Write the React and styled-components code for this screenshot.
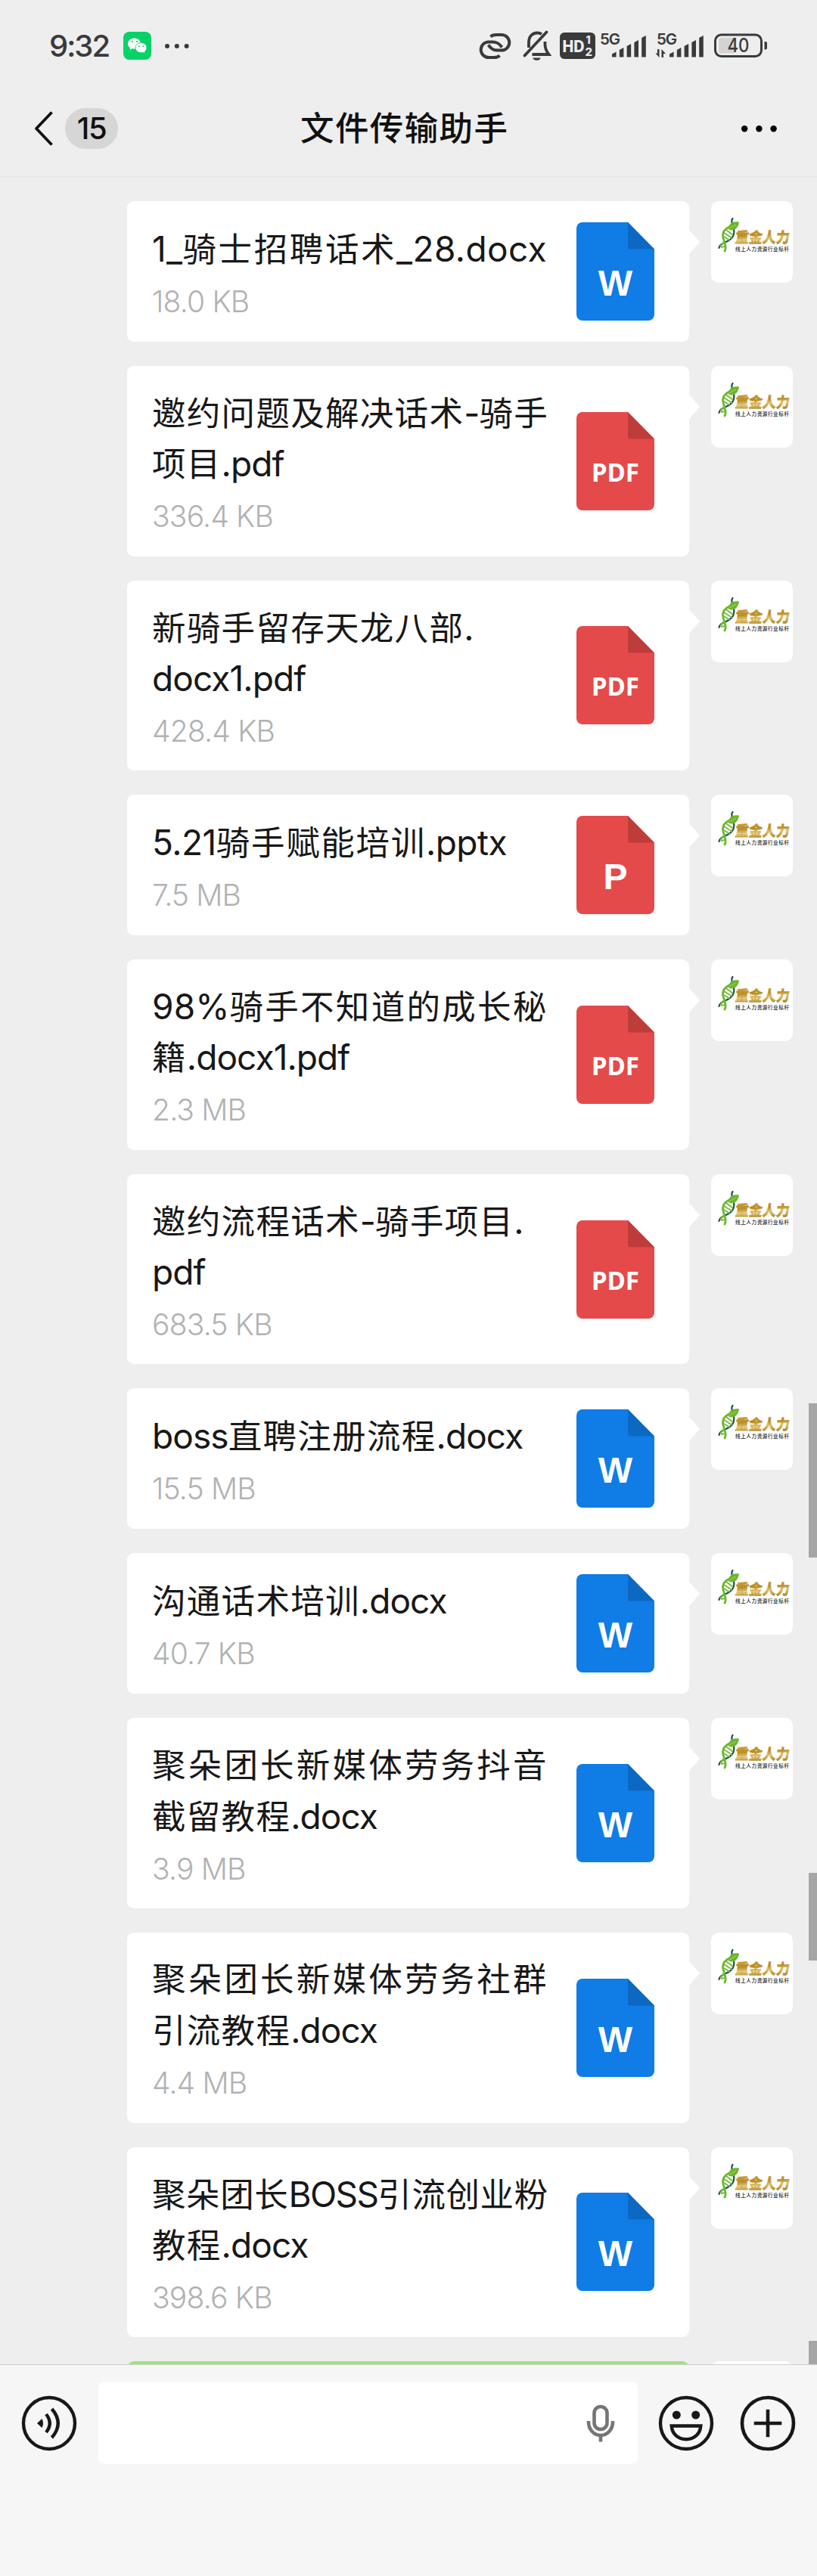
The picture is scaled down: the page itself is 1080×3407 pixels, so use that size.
import React from 'react';
import styled, { createGlobalStyle } from 'styled-components';

const GlobalStyle = createGlobalStyle`
  * {
    box-sizing: border-box;
  }

  body {
    margin: 0;
    background: #eeeeee;
    font-family: Inter, 'Noto Sans CJK SC', sans-serif;
  }

  svg {
    display: block;
    flex: none;
    overflow: visible;
  }
`;

const Screen = styled.div`
  display: flex;
  flex-direction: column;
  width: 1080px;
  height: 3407px;
  background: #eeeeee;
  overflow: hidden;
`;

const StatusBar = styled.div`
  display: flex;
  align-items: center;
  justify-content: space-between;
  height: 121px;
  padding: 0 65px 0 65px;
  color: #3a3a3a;
`;

const StatusGroup = styled.div`
  display: flex;
  align-items: center;
`;

const Clock = styled.span`
  width: 98px;
  font-size: 40px;
  font-weight: 500;
  letter-spacing: -2px;
  line-height: 48px;
`;

const NavBar = styled.div`
  display: grid;
  grid-template-columns: 397px 1fr 100px;
  align-items: center;
  height: 114px;
  padding-bottom: 14px;
  border-bottom: 2px solid #e8e8e8;
`;

const NavLeft = styled.div`
  display: flex;
  align-items: center;
  gap: 15px;
  padding-left: 44px;
`;

const UnreadBadge = styled.span`
  width: 70px;
  height: 54px;
  border-radius: 27px;
  background: #d6d6d6;
  color: #111111;
  font-size: 40px;
  font-weight: 500;
  letter-spacing: -1.5px;
  line-height: 54px;
  text-align: center;
`;

const Title = styled.h1`
  margin: 0;
  color: #111111;
  font-size: 44.5px;
  font-weight: 500;
  letter-spacing: 1.4px;
  line-height: 60px;
`;

const ChatArea = styled.div`
  position: relative;
  flex: none;
  display: flex;
  flex-direction: column;
  gap: 32px;
  height: 2892px;
  padding-top: 31px;
  overflow: hidden;
`;

const ScrollMark = styled.span`
  position: absolute;
  right: 0;
  top: ${(p) => p.$top}px;
  width: 11px;
  height: ${(p) => p.$height}px;
  background: #a6a6a6;
`;

const MessageRow = styled.div`
  flex: none;
  display: flex;
  align-items: flex-start;
  justify-content: flex-end;
  gap: 29px;
  padding-right: 32px;
`;

const Bubble = styled.div`
  position: relative;
  display: flex;
  align-items: center;
  width: 743px;
  height: ${(p) => (p.$tall ? 251.6 : 186)}px;
  padding: 0 46px 0 33px;
  border-radius: 9px;
  background: ${(p) => (p.$own ? '#9fe37b' : '#ffffff')};

  &::after {
    content: '';
    position: absolute;
    left: 100%;
    top: 38px;
    border-style: solid;
    border-width: 16px 0 16px 14px;
    border-color: transparent transparent transparent ${(p) => (p.$own ? '#9fe37b' : '#ffffff')};
  }
`;

const FileInfo = styled.div`
  flex: 1;
  white-space: nowrap;
`;

const NameLine = styled.div`
  height: 67px;
  color: #181818;
  font-size: 44.5px;
  line-height: 67px;
`;

const Cjk = styled.span`
  letter-spacing: ${(p) => 1.3 + p.$spread}px;
`;

const Latin = styled.span`
  font-size: 46px;
  letter-spacing: ${(p) => p.$spread - 0.9}px;
`;

const FileSize = styled.div`
  height: 59px;
  color: #b2b2b2;
  font-size: 39px;
  font-weight: 300;
  letter-spacing: -0.8px;
  line-height: 71px;
`;

const Avatar = styled.div`
  width: 108px;
  height: 108px;
  border-radius: 10px;
  background: #ffffff;
`;

const InputBar = styled.div`
  flex: 1;
  display: flex;
  align-items: flex-start;
  padding: 22px 28px 0 28px;
  border-top: 1px solid #cfcfcf;
  background: #f6f6f6;
`;

const RoundButton = styled.button`
  display: flex;
  align-items: center;
  width: 74px;
  height: 109px;
  padding: 0;
  border: none;
  background: none;
`;

const InputBox = styled.div`
  display: flex;
  align-items: center;
  justify-content: flex-end;
  width: 713px;
  height: 109px;
  margin: 0 27px 0 28px;
  padding-right: 29px;
  border-radius: 9px;
  background: #ffffff;
`;

const Spacer = styled.span`
  width: ${(p) => p.$w}px;
`;

const FILES = [
  { lines: ['1_骑士招聘话术_28.docx'], size: '18.0 KB', type: 'W', spread: 1.3 },
  { lines: ['邀约问题及解决话术-骑手', '项目.pdf'], size: '336.4 KB', type: 'PDF' },
  { lines: ['新骑手留存天龙八部.', 'docx1.pdf'], size: '428.4 KB', type: 'PDF' },
  { lines: ['5.21骑手赋能培训.pptx'], size: '7.5 MB', type: 'P', spread: 0.4 },
  { lines: ['98%骑手不知道的成长秘', '籍.docx1.pdf'], size: '2.3 MB', type: 'PDF', spread: 1 },
  { lines: ['邀约流程话术-骑手项目.', 'pdf'], size: '683.5 KB', type: 'PDF' },
  { lines: ['boss直聘注册流程.docx'], size: '15.5 MB', type: 'W' },
  { lines: ['沟通话术培训.docx'], size: '40.7 KB', type: 'W' },
  { lines: ['聚朵团长新媒体劳务抖音', '截留教程.docx'], size: '3.9 MB', type: 'W', spread: 1.9 },
  { lines: ['聚朵团长新媒体劳务社群', '引流教程.docx'], size: '4.4 MB', type: 'W', spread: 1.9 },
  { lines: ['聚朵团长BOSS引流创业粉', '教程.docx'], size: '398.6 KB', type: 'W', spread: -0.7 },
];

const FILE_COLORS = {
  W: { base: '#107ce6', fold: '#0d68c2' },
  P: { base: '#e54a4b', fold: '#be3d3b' },
  PDF: { base: '#e54a4b', fold: '#be3d3b' },
};

// latin and chinese runs are tracked separately
function FileName({ text, spread = 0 }) {
  const runs = text.match(/[\u4e00-\u9fff]+|[^\u4e00-\u9fff]+/g);
  return (
    <NameLine>
      {runs.map((run, i) =>
        /[\u4e00-\u9fff]/.test(run) ? (
          <Cjk key={i} $spread={spread}>{run}</Cjk>
        ) : (
          <Latin key={i} $spread={spread}>{run}</Latin>
        )
      )}
    </NameLine>
  );
}

function FileIcon({ type }) {
  const { base, fold } = FILE_COLORS[type];
  const wide = type === 'PDF';
  return (
    <svg width="103" height="130" viewBox="0 0 103 130">
      <path d="M8 0H68L103 35.5V122a8 8 0 0 1-8 8H8a8 8 0 0 1-8-8V8a8 8 0 0 1 8-8Z" fill={base} />
      <path d="M68 0L103 35.5H71a3 3 0 0 1-3-3Z" fill={fold} />
      <text
        x="51.5"
        y={wide ? 91.5 : 96.5}
        textAnchor="middle"
        textLength={wide ? 63 : undefined}
        lengthAdjust="spacingAndGlyphs"
        fill="#ffffff"
        fontFamily={wide ? "'Noto Sans', sans-serif" : "'Liberation Sans', sans-serif"}
        fontSize={wide ? 34 : 48}
        fontWeight="700"
      >
        {type}
      </text>
    </svg>
  );
}

function AvatarLogo() {
  return (
    <svg width="108" height="108" viewBox="0 0 108 108">
      <defs>
        <linearGradient id="gold" x1="0" y1="0" x2="0.15" y2="1">
          <stop offset="0" stopColor="#dcb44c" />
          <stop offset="0.45" stopColor="#b98a22" />
          <stop offset="0.65" stopColor="#dfc069" />
          <stop offset="1" stopColor="#a37614" />
        </linearGradient>
      </defs>
      <path d="M28.5 23C25 27 29 31 30 36C31 43 30 47 25 51C19 55 11 56 10.5 62" fill="none" stroke="#184f57" strokeWidth="2.2" strokeLinecap="round" />
      <path d="M24 34C14 39 15 47 17 52C18 57 21 61 18 66" fill="none" stroke="#6ab82c" strokeWidth="2.8" strokeLinecap="round" />
      <path d="M20 38L29 45M17 42L28 49M17 47L25 52M17 54L12 60M18 60L13 61" stroke="#77bd3a" strokeWidth="2" />
      <path d="M23 37.5C23 29 29 26 37 27.5C36 35 31 41 23 37.5Z" fill="#6db52a" />
      <path d="M24 36L33 31" stroke="#b5db83" strokeWidth="0.8" />
      <text
        x="31"
        y="55.5"
        textLength="72"
        lengthAdjust="spacingAndGlyphs"
        transform="translate(6 0) skewX(-6)"
        fill="url(#gold)"
        stroke="url(#gold)"
        strokeWidth="0.4"
        fontFamily="'Noto Sans CJK SC', sans-serif"
        fontSize="19.5"
        fontWeight="900"
      >
        重金人力
      </text>
      <text x="32" y="65.5" textLength="71" fill="#222222" fontFamily="'Noto Sans CJK SC', sans-serif" fontSize="6.6" fontWeight="500">
        线上人力资源行业标杆
      </text>
    </svg>
  );
}

function WechatIcon() {
  return (
    <svg width="37" height="37" viewBox="0 0 37 37">
      <rect width="37" height="37" rx="8" fill="#07d268" />
      <path d="M14.5 8.5C9.7 8.5 6 11.7 6 15.7C6 18 7.2 20 9 21.3L8.6 24L11.6 22.3C12.5 22.6 13.5 22.7 14.5 22.7C19.3 22.7 23 19.6 23 15.7C23 11.7 19.3 8.5 14.5 8.5Z" fill="#fff" />
      <path d="M23.5 14.5C19.3 14.5 16 17.4 16 21.1C16 24.8 19.3 27.7 23.5 27.7C24.4 27.7 25.3 27.6 26.1 27.3L28.7 28.7L28.3 26.2C30 25 31 23.2 31 21.1C31 17.4 27.7 14.5 23.5 14.5Z" fill="#fff" stroke="#07d268" strokeWidth="0.9" />
      <circle cx="12" cy="13" r="1.1" fill="#07d268" />
      <circle cx="18" cy="13" r="1.1" fill="#07d268" />
      <circle cx="21" cy="19.3" r="1" fill="#07d268" />
      <circle cx="26.4" cy="19.3" r="1" fill="#07d268" />
    </svg>
  );
}

function Dots({ r, step }) {
  return (
    <svg width={step * 2 + r * 2} height={r * 2} fill="currentColor">
      {[0, 1, 2].map((i) => (
        <circle key={i} cx={r + i * step} cy={r} r={r} />
      ))}
    </svg>
  );
}

function LinkIcon() {
  return (
    <svg width="47" height="38" viewBox="0 0 47 38" fill="none" stroke="currentColor" strokeWidth="4">
      <path d="M29.5 31.5C27 34 25 34 22 34H15A10.3 10.3 0 0 1 15 13.4H20C26 13.4 29 15.5 32.5 20.5" />
      <path d="M17.5 6.5C20 4 22 4 25 4H32A10.3 10.3 0 0 1 32 24.6H27C21 24.6 18 22.5 14.5 17.5" />
    </svg>
  );
}

function MutedIcon() {
  return (
    <svg width="37" height="39" viewBox="0 0 37 39" fill="none" stroke="currentColor" strokeWidth="3.8">
      <path d="M8 22V15C8 7 13 2.5 19 2.5C21.5 2.5 23.5 3.2 25 4.2" />
      <path d="M29.5 14V18C29.5 24 31.5 27 34.5 31H12.5" />
      <path d="M2.5 32.5L31.5 1.5" strokeLinecap="round" />
      <path d="M13 35.5H24C22.5 38.5 20.5 38.8 18.5 38.8S14.5 38.5 13 35.5Z" fill="currentColor" stroke="none" />
    </svg>
  );
}

function HdIcon() {
  return (
    <svg width="47" height="35" viewBox="0 0 47 35" fontWeight="800" fill="#eeeeee" fontFamily="Inter, sans-serif">
      <rect width="47" height="35" rx="6" fill="#3a3a3a" />
      <text x="3.5" y="25.5" fontSize="21" textLength="29" lengthAdjust="spacingAndGlyphs">HD</text>
      <text x="34.5" y="14.5" fontSize="14">1</text>
      <text x="33.5" y="31" fontSize="15">2</text>
    </svg>
  );
}

function SignalIcon({ data }) {
  const shift = data ? 1 : 0;
  const bars = [25.5, 20, 15, 10, 4];
  return (
    <svg width="62" height="36" viewBox="0 0 62 36" fill="currentColor">
      <text x="0" y="15.5" fontSize="20.5" fontWeight="600" textLength="27" fontFamily="Inter, sans-serif">5G</text>
      {bars.map((top, i) => {
        const x = 16 + shift + i * 9.8;
        return <path key={i} d={`M${x} ${top + 3}L${x + 5.6} ${top}V32.5H${x}Z`} />;
      })}
      {data && <path d="M3.5 22V33L-1.5 27.5H1V22ZM6.5 33V22L12 28H9V33Z" />}
    </svg>
  );
}

function BatteryIcon() {
  return (
    <svg width="71" height="33" viewBox="0 0 71 33">
      <rect x="1.5" y="2" width="61" height="28.5" rx="8" fill="none" stroke="#3a3a3a" strokeWidth="3" />
      <rect x="6" y="6" width="22" height="20.5" rx="3" fill="#d3d3d3" />
      <path d="M66.5 11H68a2 2 0 0 1 2 2V19.5a2 2 0 0 1-2 2H66.5Z" fill="#3a3a3a" />
      <text x="32" y="25.2" fontSize="25" fontWeight="500" textAnchor="middle" textLength="29" lengthAdjust="spacingAndGlyphs" fill="#3a3a3a" fontFamily="Inter, sans-serif">
        40
      </text>
    </svg>
  );
}

function VoiceIcon() {
  return (
    <svg width="74" height="74" viewBox="0 0 74 74" fill="none" stroke="#181818" strokeWidth="4.4">
      <circle cx="37" cy="37" r="34" />
      <path d="M21 37L27.5 31Q30.5 37 27.5 43Z" fill="#181818" stroke="none" />
      <path d="M33 25Q42.5 37 33 49" />
      <path d="M40.5 18Q57 37 40.5 56" />
    </svg>
  );
}

function MicIcon() {
  return (
    <svg width="40" height="52" viewBox="0 0 40 52" fill="none" stroke="#757575" strokeWidth="4.6">
      <rect x="11.5" y="4" width="17" height="30" rx="8.5" />
      <path d="M4 23V24.5C4 34 11 42 20 42S36 34 36 24.5V23" />
      <path d="M20 42V50.5" />
    </svg>
  );
}

function SmileIcon() {
  return (
    <svg width="74" height="74" viewBox="0 0 74 74" fill="none" stroke="#181818" strokeWidth="4.4">
      <circle cx="37" cy="37" r="34" />
      <circle cx="24.3" cy="26" r="5.5" fill="#181818" stroke="none" />
      <circle cx="49.7" cy="26" r="5.5" fill="#181818" stroke="none" />
      <path d="M17.7 40.5H56.3C55.5 51.5 47.5 58.2 37 58.2S18.5 51.5 17.7 40.5Z" />
    </svg>
  );
}

function PlusIcon() {
  return (
    <svg width="74" height="74" viewBox="0 0 74 74" fill="none" stroke="#181818" strokeWidth="4.6">
      <circle cx="37" cy="37" r="34" />
      <path d="M18.7 37H55.3M37 18.7V55.3" />
    </svg>
  );
}

export default function App() {
  return (
    <Screen>
      <GlobalStyle />
      <StatusBar>
        <StatusGroup>
          <Clock>9:32</Clock>
          <WechatIcon />
          <Spacer $w={18} />
          <Dots r={3} step={12.8} />
        </StatusGroup>
        <StatusGroup>
          <LinkIcon />
          <Spacer $w={13} />
          <MutedIcon />
          <Spacer $w={12} />
          <HdIcon />
          <Spacer $w={6} />
          <SignalIcon />
          <Spacer $w={13} />
          <SignalIcon data />
          <Spacer $w={14} />
          <BatteryIcon />
        </StatusGroup>
      </StatusBar>

      <NavBar>
        <NavLeft>
          <svg width="27" height="48" viewBox="0 0 27 48" fill="none" stroke="#111111" strokeWidth="3.8">
            <path d="M24.5 2.5L4 24L24.5 45.5" strokeLinejoin="round" />
          </svg>
          <UnreadBadge>15</UnreadBadge>
        </NavLeft>
        <Title>文件传输助手</Title>
        <Dots r={4.2} step={19.2} />
      </NavBar>

      <ChatArea>
        {FILES.map((file) => (
          <MessageRow key={file.lines.join('')}>
            <Bubble $tall={file.lines.length > 1}>
              <FileInfo>
                {file.lines.map((line, i) => (
                  <FileName key={line} text={line} spread={i === 0 ? file.spread : 0} />
                ))}
                <FileSize>{file.size}</FileSize>
              </FileInfo>
              <FileIcon type={file.type} />
            </Bubble>
            <Avatar>
              <AvatarLogo />
            </Avatar>
          </MessageRow>
        ))}
        <MessageRow>
          <Bubble $own />
          <Avatar />
        </MessageRow>
        <ScrollMark $top={1621} $height={204} />
        <ScrollMark $top={2242} $height={116} />
        <ScrollMark $top={2861} $height={31} />
      </ChatArea>

      <InputBar>
        <RoundButton aria-label="voice">
          <VoiceIcon />
        </RoundButton>
        <InputBox>
          <MicIcon />
        </InputBox>
        <RoundButton aria-label="emoji">
          <SmileIcon />
        </RoundButton>
        <Spacer $w={34} />
        <RoundButton aria-label="more">
          <PlusIcon />
        </RoundButton>
      </InputBar>
    </Screen>
  );
}
